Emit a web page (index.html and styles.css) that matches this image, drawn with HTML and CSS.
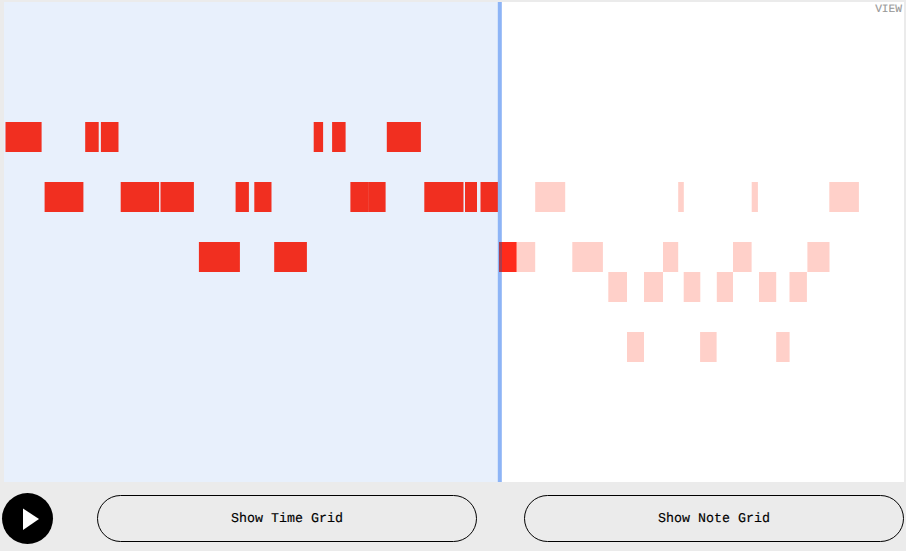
FILE: index.html
```html
<!DOCTYPE html>
<html lang="en">
<head>
<meta charset="utf-8">
<title>Melody player</title>
<link rel="stylesheet" href="styles.css">
</head>
<body>
<main class="player">
  <section class="roll">
    <svg class="notes" viewBox="4 2 900 480" width="900" height="480" aria-hidden="true">
      <rect class="elapsed" x="4" y="2" width="494" height="480"/>
      <g class="played">
        <rect x="5.5" y="122" width="36.1" height="30"/>
        <rect x="85.2" y="122" width="13.5" height="30"/>
        <rect x="100.9" y="122" width="17.6" height="30"/>
        <rect x="313.7" y="122" width="9.4" height="30"/>
        <rect x="332.1" y="122" width="13.5" height="30"/>
        <rect x="386.8" y="122" width="34.1" height="30"/>
        <rect x="44.6" y="182" width="38.8" height="30"/>
        <rect x="120.7" y="182" width="38.4" height="30"/>
        <rect x="160.5" y="182" width="33.4" height="30"/>
        <rect x="235.6" y="182" width="13.3" height="30"/>
        <rect x="254.3" y="182" width="17.2" height="30"/>
        <rect x="350.4" y="182" width="18.1" height="30"/>
        <rect x="368.2" y="182" width="17.4" height="30"/>
        <rect x="424.3" y="182" width="39.2" height="30"/>
        <rect x="465" y="182" width="12" height="30"/>
        <rect x="480.5" y="182" width="17.5" height="30"/>
        <rect x="198.9" y="242" width="41" height="30"/>
        <rect x="274.2" y="242" width="32.7" height="30"/>
      </g>
      <g class="upcoming">
        <rect x="516.6" y="242" width="18.6" height="30"/>
        <rect x="535.2" y="182" width="30" height="30"/>
        <rect x="572.3" y="242" width="30.6" height="30"/>
        <rect x="608.3" y="272" width="18.7" height="30"/>
        <rect x="627" y="332" width="17" height="30"/>
        <rect x="644" y="272" width="19" height="30"/>
        <rect x="663" y="242" width="15.2" height="30"/>
        <rect x="678.2" y="182" width="5.6" height="30"/>
        <rect x="683.7" y="272" width="16.6" height="30"/>
        <rect x="700.1" y="332" width="16.5" height="30"/>
        <rect x="716.8" y="272" width="16.2" height="30"/>
        <rect x="733" y="242" width="18.6" height="30"/>
        <rect x="751.7" y="182" width="6.2" height="30"/>
        <rect x="759" y="272" width="17.2" height="30"/>
        <rect x="776.2" y="332" width="13.4" height="30"/>
        <rect x="789.5" y="272" width="17.4" height="30"/>
        <rect x="807.4" y="242" width="22.1" height="30"/>
        <rect x="829.3" y="182" width="29.6" height="30"/>
      </g>
      <rect class="playhead" x="497.8" y="2" width="4" height="480"/>
      <rect class="current" x="499" y="242" width="17.6" height="30"/>
      <rect class="current-shade" x="499" y="242" width="3" height="30"/>
    </svg>
    <span class="view-label">VIEW</span>
  </section>
  <div class="controls">
    <button class="play" type="button" aria-label="Play">
      <svg viewBox="0 0 51 51" width="51" height="51" aria-hidden="true"><path d="M21 15.5 37 26 21 37Z"/></svg>
    </button>
    <button class="toggle" type="button">Show Time Grid</button>
    <button class="toggle" type="button">Show Note Grid</button>
  </div>
</main>
</body>
</html>
```

FILE: styles.css
```css
* {
  box-sizing: border-box;
}

body {
  margin: 0;
  background: #ebebeb;
  font-family: "Liberation Mono", monospace;
}

.player {
  width: 906px;
  height: 551px;
  padding: 2px 2px 0;
  overflow: hidden;
}

.roll {
  position: relative;
  width: 900px;
  height: 480px;
  margin-left: 2px;
  background: #fff;
}

.notes {
  display: block;
}

.elapsed {
  fill: #e8f0fc;
}

.played {
  fill: #f12f20;
}

.upcoming {
  fill: #ffd0c9;
}

.playhead {
  fill: #8db4f6;
}

.current {
  fill: #ff2b1c;
}

.current-shade {
  fill: #a93e4e;
}

.view-label {
  position: absolute;
  top: 2px;
  right: 2px;
  color: #999;
  font-size: 11.2px;
  line-height: 12px;
  -webkit-text-stroke: 0.12px #999;
  text-rendering: geometricPrecision;
}

.controls {
  display: flex;
  align-items: center;
  height: 51px;
  margin-top: 11px;
}

.play {
  width: 51px;
  height: 51px;
  padding: 0;
  border: 0;
  border-radius: 50%;
  background: #000;
}

.play svg {
  display: block;
  fill: #fff;
}

.toggle {
  width: 380px;
  height: 47px;
  padding: 2px 0 0;
  border: 1px solid #000;
  border-radius: 24px;
  background: transparent;
  color: #000;
  font: 13.333px "Liberation Mono", monospace;
  -webkit-text-stroke: 0.15px #000;
  text-rendering: geometricPrecision;
}

.play + .toggle {
  margin-left: 44px;
}

.toggle + .toggle {
  margin-left: 47px;
}
```
